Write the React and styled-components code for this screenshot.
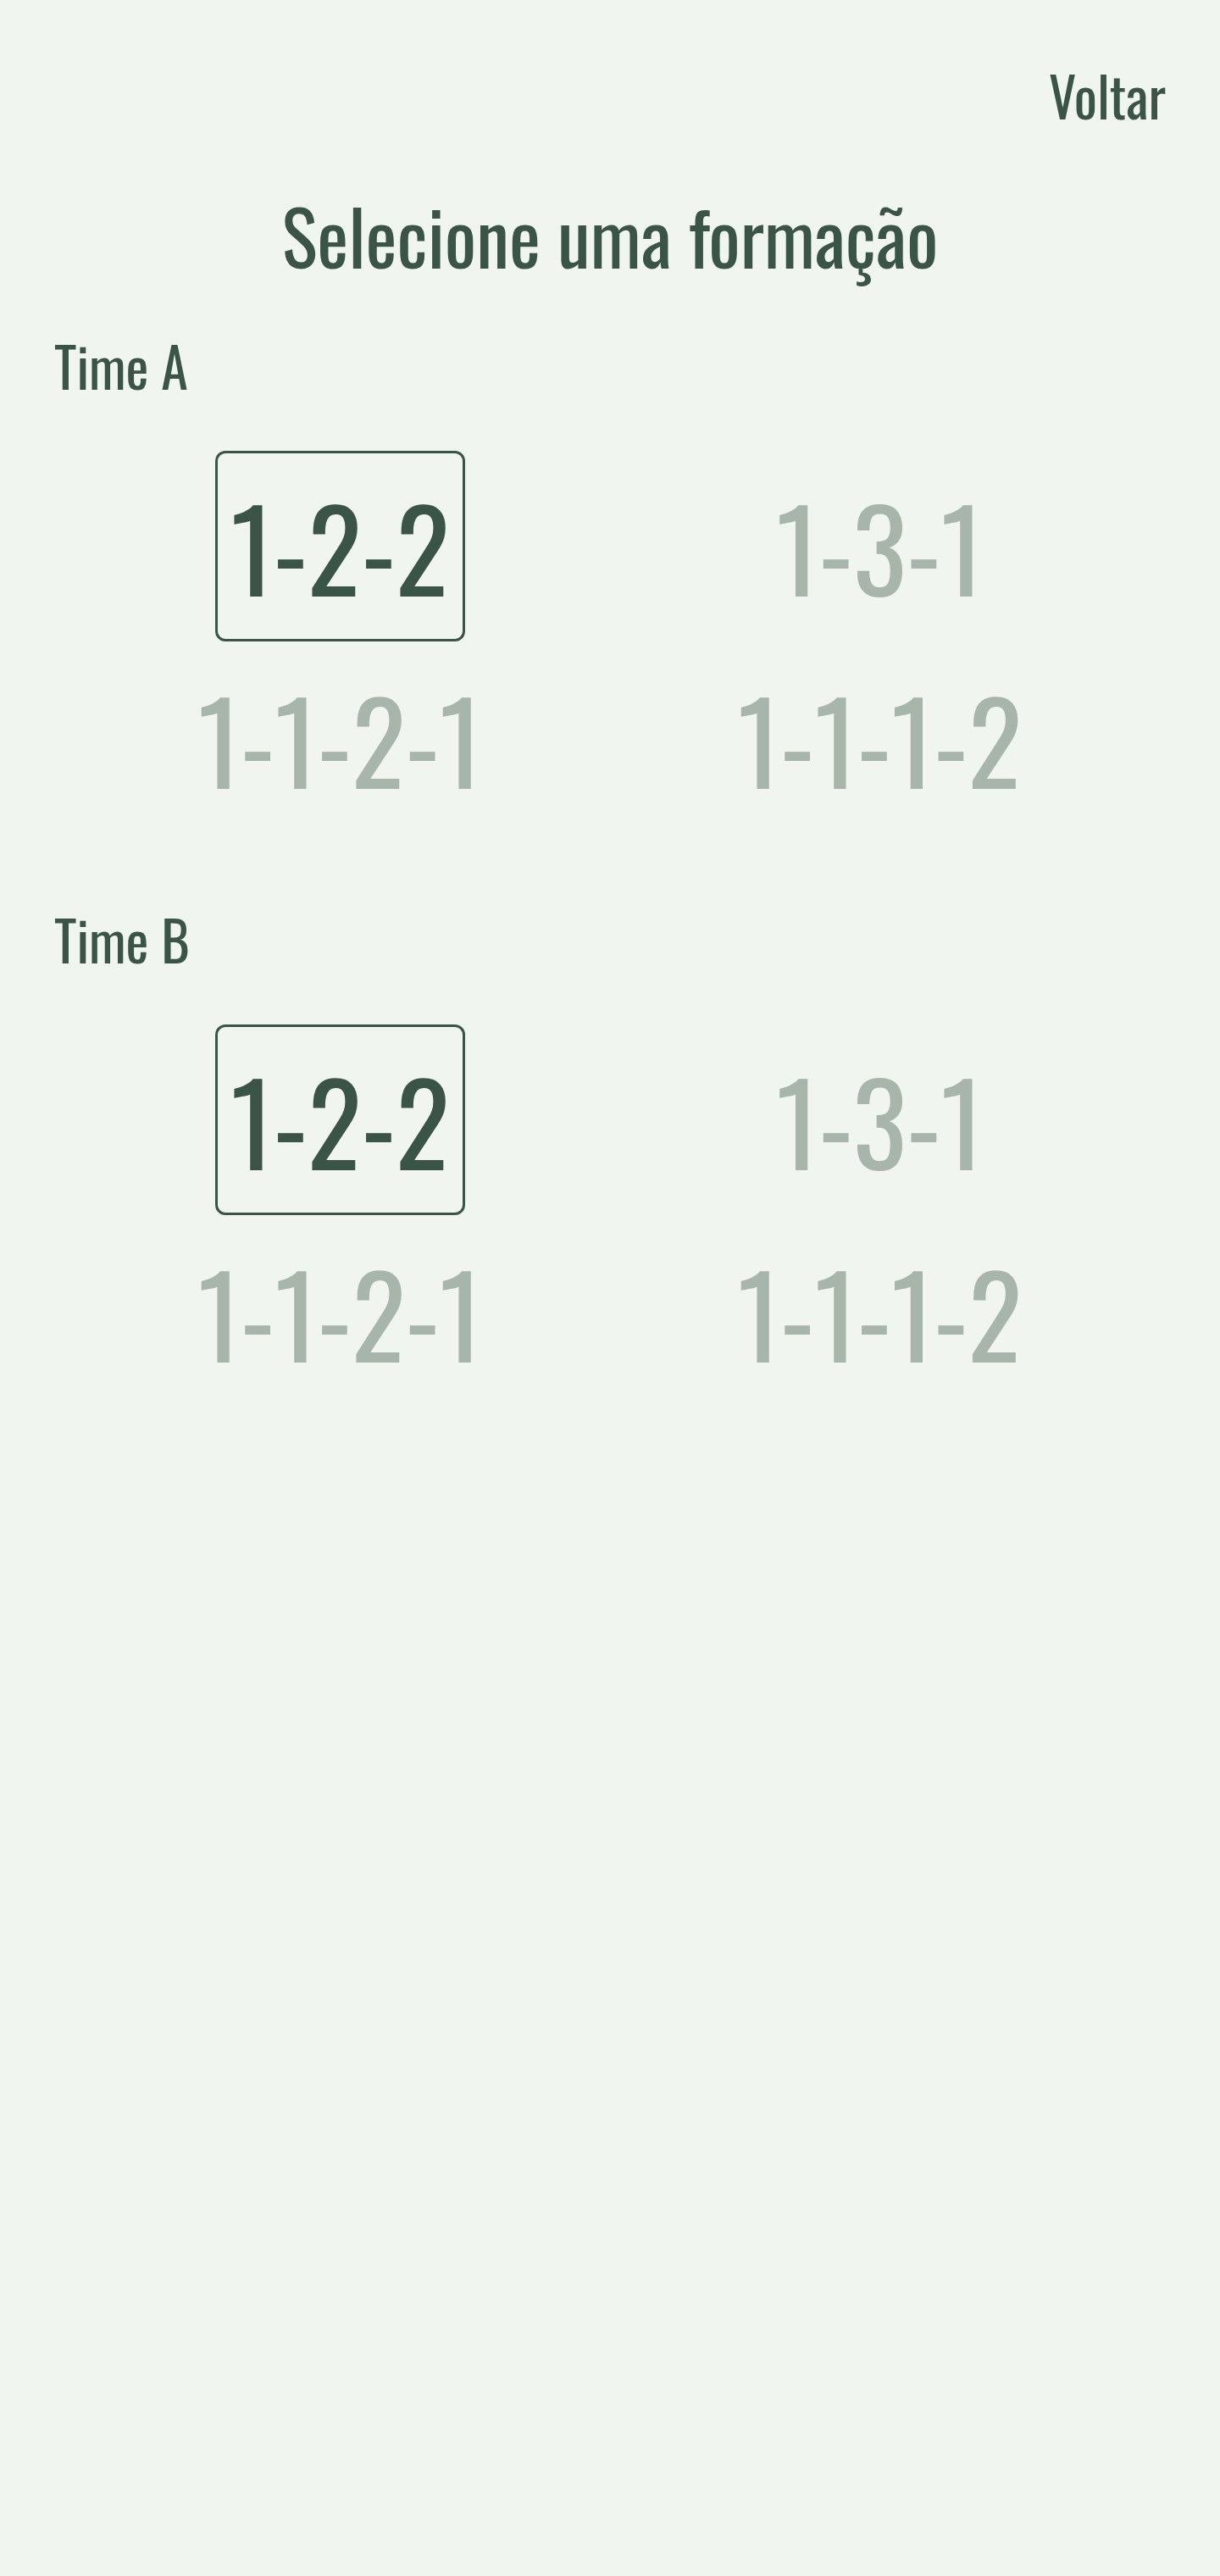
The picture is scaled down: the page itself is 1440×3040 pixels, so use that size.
import React, { useState } from 'react'
import styled, { createGlobalStyle } from 'styled-components'

const FONT = `"Oswald", "Roboto Condensed", "DejaVu Sans Condensed", sans-serif`

const GlobalStyle = createGlobalStyle`
  html, body {
    margin: 0;
    padding: 0;
    background: #f0f5ef;
  }
  body {
    font-family: ${FONT};
    color: #3b5448;
  }
`

const Page = styled.div`
  min-height: 3040px;
  box-sizing: border-box;
  padding: 0 64px;
`

const TopBar = styled.nav`
  display: flex;
  justify-content: flex-end;
  padding-top: 76px;
`

const BackLink = styled.a`
  font-size: 64px;
  line-height: 72px;
  color: #3b5448;
  text-decoration: none;
  cursor: pointer;
`

const Title = styled.h1`
  margin: 0;
  padding-top: 81px;
  text-align: center;
  font-size: 88px;
  line-height: 96px;
  font-weight: 400;
`

const Section = styled.section`
  padding-top: ${p => p.$gap}px;
`

const TeamLabel = styled.h2`
  margin: 0;
  font-size: 64px;
  line-height: 72px;
  font-weight: 400;
`

const Grid = styled.div`
  display: grid;
  grid-template-columns: repeat(2, 637px);
  justify-content: center;
  row-gap: 2px;
  margin-top: 65px;
`

const Cell = styled.div`
  display: flex;
  justify-content: center;
`

const Option = styled.button`
  box-sizing: border-box;
  height: 225px;
  padding: 0 15px 3px;
  display: flex;
  align-items: center;
  justify-content: center;
  background: transparent;
  border: 3px solid ${p => (p.$active ? '#3b5448' : 'transparent')};
  border-radius: 12px;
  font-family: ${FONT};
  font-size: 133px;
  line-height: 1;
  color: ${p => (p.$active ? '#3b5448' : '#a8b5ab')};
  cursor: pointer;
`

const FORMATIONS = ['1-2-2', '1-3-1', '1-1-2-1', '1-1-1-2']

function TeamPicker({ name, gap }) {
  const [picked, setPicked] = useState('1-2-2')
  return (
    <Section $gap={gap}>
      <TeamLabel>{name}</TeamLabel>
      <Grid>
        {FORMATIONS.map(f => (
          <Cell key={f}>
            <Option $active={picked === f} onClick={() => setPicked(f)}>
              {f}
            </Option>
          </Cell>
        ))}
      </Grid>
    </Section>
  )
}

export default function App() {
  return (
    <>
      <GlobalStyle />
      <Page>
        <TopBar>
          <BackLink>Voltar</BackLink>
        </TopBar>
        <Title>Selecione uma formação</Title>
        <TeamPicker name='Time A' gap={70} />
        <TeamPicker name='Time B' gap={88} />
      </Page>
    </>
  )
}
